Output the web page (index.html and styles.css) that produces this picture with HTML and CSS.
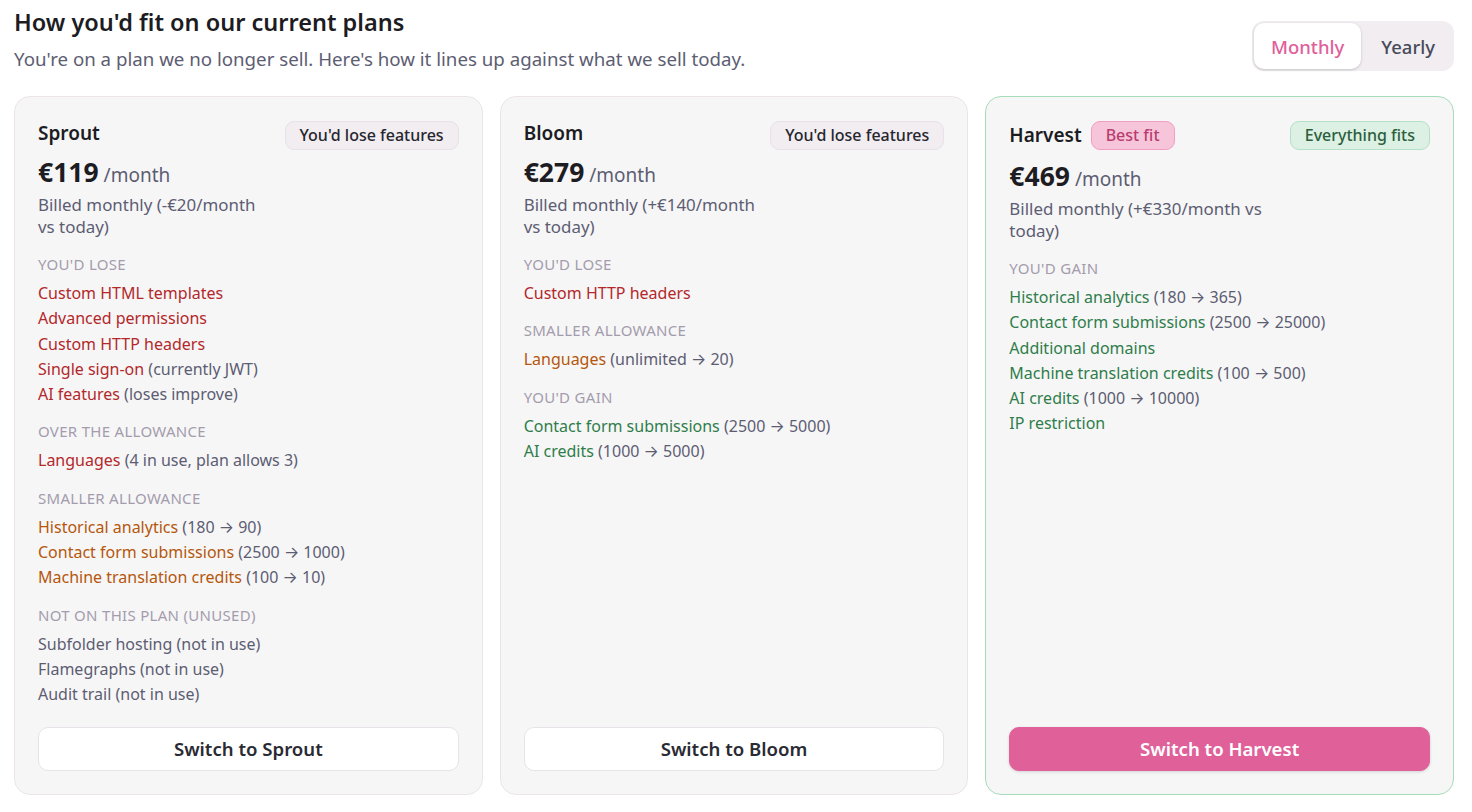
FILE: index.html
```html
<!DOCTYPE html>
<html lang="en">
<head>
    <meta charset="UTF-8">
    <meta name="viewport" content="width=device-width, initial-scale=1.0">
    <title>Plan comparison</title>
    <link rel="stylesheet" href="styles.css">
</head>
<body>
    <div class="page-header">
        <div class="intro">
            <h1>How you'd fit on our current plans</h1>
            <p class="subtitle">You're on a plan we no longer sell. Here's how it lines up against what we sell today.</p>
        </div>
        <div class="period-toggle">
            <button class="period active">Monthly</button>
            <button class="period">Yearly</button>
        </div>
    </div>

    <div class="plans">
        <!-- Sprout -->
        <div class="plan">
            <div class="plan-top">
                <div class="plan-info">
                    <div class="plan-name">Sprout</div>
                    <div class="plan-price"><strong>€119</strong> /month</div>
                    <div class="plan-billing">Billed monthly (-€20/month vs today)</div>
                </div>
                <span class="badge badge-lose">You'd lose features</span>
            </div>
            <div class="plan-sections">
                <div class="section">
                    <div class="section-label">You'd lose</div>
                    <ul>
                        <li><span class="lose">Custom HTML templates</span></li>
                        <li><span class="lose">Advanced permissions</span></li>
                        <li><span class="lose">Custom HTTP headers</span></li>
                        <li><span class="lose">Single sign-on</span> (currently JWT)</li>
                        <li><span class="lose">AI features</span> (loses improve)</li>
                    </ul>
                </div>
                <div class="section">
                    <div class="section-label">Over the allowance</div>
                    <ul>
                        <li><span class="lose">Languages</span> (4 in use, plan allows 3)</li>
                    </ul>
                </div>
                <div class="section">
                    <div class="section-label">Smaller allowance</div>
                    <ul>
                        <li><span class="less">Historical analytics</span> (180 <span class="arrow">→</span> 90)</li>
                        <li><span class="less">Contact form submissions</span> (2500 <span class="arrow">→</span> 1000)</li>
                        <li><span class="less">Machine translation credits</span> (100 <span class="arrow">→</span> 10)</li>
                    </ul>
                </div>
                <div class="section">
                    <div class="section-label">Not on this plan (unused)</div>
                    <ul>
                        <li>Subfolder hosting (not in use)</li>
                        <li>Flamegraphs (not in use)</li>
                        <li>Audit trail (not in use)</li>
                    </ul>
                </div>
            </div>
            <button class="switch-button">Switch to Sprout</button>
        </div>

        <!-- Bloom -->
        <div class="plan">
            <div class="plan-top">
                <div class="plan-info">
                    <div class="plan-name">Bloom</div>
                    <div class="plan-price"><strong>€279</strong> /month</div>
                    <div class="plan-billing">Billed monthly (+€140/month vs today)</div>
                </div>
                <span class="badge badge-lose">You'd lose features</span>
            </div>
            <div class="plan-sections">
                <div class="section">
                    <div class="section-label">You'd lose</div>
                    <ul>
                        <li><span class="lose">Custom HTTP headers</span></li>
                    </ul>
                </div>
                <div class="section">
                    <div class="section-label">Smaller allowance</div>
                    <ul>
                        <li><span class="less">Languages</span> (unlimited <span class="arrow">→</span> 20)</li>
                    </ul>
                </div>
                <div class="section">
                    <div class="section-label">You'd gain</div>
                    <ul>
                        <li><span class="gain">Contact form submissions</span> (2500 <span class="arrow">→</span> 5000)</li>
                        <li><span class="gain">AI credits</span> (1000 <span class="arrow">→</span> 5000)</li>
                    </ul>
                </div>
            </div>
            <button class="switch-button">Switch to Bloom</button>
        </div>

        <!-- Harvest -->
        <div class="plan plan-best">
            <div class="plan-top">
                <div class="plan-info">
                    <div class="plan-name">Harvest <span class="badge badge-best">Best fit</span></div>
                    <div class="plan-price"><strong>€469</strong> /month</div>
                    <div class="plan-billing">Billed monthly (+€330/month vs today)</div>
                </div>
                <span class="badge badge-fits">Everything fits</span>
            </div>
            <div class="plan-sections">
                <div class="section">
                    <div class="section-label">You'd gain</div>
                    <ul>
                        <li><span class="gain">Historical analytics</span> (180 <span class="arrow">→</span> 365)</li>
                        <li><span class="gain">Contact form submissions</span> (2500 <span class="arrow">→</span> 25000)</li>
                        <li><span class="gain">Additional domains</span></li>
                        <li><span class="gain">Machine translation credits</span> (100 <span class="arrow">→</span> 500)</li>
                        <li><span class="gain">AI credits</span> (1000 <span class="arrow">→</span> 10000)</li>
                        <li><span class="gain">IP restriction</span></li>
                    </ul>
                </div>
            </div>
            <button class="switch-button switch-primary">Switch to Harvest</button>
        </div>
    </div>
</body>
</html>
```

FILE: styles.css
```css
* {
    box-sizing: border-box;
}

:root {
    --pink: #e0609a;
    --text-color: #1c1c22;
    --muted: #5d5d72;
    --label: #a49cac;
    --lose: #b3282a;
    --less: #b5570c;
    --gain: #2f7d4a;
    --card-bg: #f6f6f7;
    --card-border: #ebe5ea;
}

body {
    margin: 0;
    padding: 8px 18px 0 14px;
    font-family: 'Noto Sans', sans-serif;
    color: var(--text-color);
    background: white;
}

/* Header */
.page-header {
    display: flex;
    justify-content: space-between;
    align-items: flex-end;
}

h1 {
    margin: 0;
    font-size: 23.5px;
    line-height: 29px;
    font-weight: 600;
}

.subtitle {
    margin: 9px 0 0;
    font-size: 18.7px;
    line-height: 26px;
    color: var(--muted);
}

.period-toggle {
    display: flex;
    gap: 3px;
    padding: 2px;
    background: #f1edf1;
    border-radius: 12px;
    margin-bottom: 1px;
}

.period {
    font-family: inherit;
    font-size: 18.5px;
    font-weight: 500;
    border: none;
    background: none;
    color: #474a5a;
    height: 46px;
    padding: 0 17px;
    border-radius: 10px;
    cursor: pointer;
}

.period.active {
    background: white;
    color: var(--pink);
    box-shadow: 0 1px 3px rgba(0, 0, 0, 0.18);
}

/* Plan cards */
.plans {
    display: grid;
    grid-template-columns: repeat(3, 1fr);
    gap: 17px;
    margin-top: 24px;
}

.plan {
    display: flex;
    flex-direction: column;
    background: var(--card-bg);
    border: 1px solid var(--card-border);
    border-radius: 16px;
    padding: 24px 23px 23px;
}

.plan-best {
    border-color: #a6dcba;
}

.plan-top {
    display: flex;
    align-items: flex-start;
    gap: 12px;
}

.plan-info {
    flex: 1;
    min-width: 0;
}

.plan-name {
    display: flex;
    align-items: center;
    gap: 9px;
    font-size: 19px;
    line-height: 25px;
    font-weight: 600;
}

.plan-price {
    margin-top: 12px;
    font-size: 19px;
    line-height: 28px;
    color: var(--muted);
}

.plan-price strong {
    font-size: 26.5px;
    font-weight: 700;
    color: var(--text-color);
}

.plan-billing {
    margin-top: 5px;
    font-size: 16.9px;
    line-height: 22px;
    color: var(--muted);
}

.badge {
    flex-shrink: 0;
    display: inline-block;
    padding: 0 14px;
    font-size: 16px;
    line-height: 27px;
    font-weight: 500;
    border-radius: 9px;
    border: 1px solid;
}

.badge-lose {
    background: #f1edf1;
    border-color: #e8e2e8;
    color: #26262e;
}

.badge-best {
    background: #f7c5d9;
    border-color: #f29ec1;
    color: #b73d71;
}

.badge-fits {
    background: #dcf0e3;
    border-color: #b6e0c6;
    color: #2b5e3d;
}

/* Feature lists */
.plan-sections {
    display: flex;
    flex-direction: column;
    gap: 13px;
    margin-top: 15px;
    margin-bottom: 19px;
}

.section-label {
    font-size: 15px;
    line-height: 22px;
    text-transform: uppercase;
    letter-spacing: 0.02em;
    color: var(--label);
    margin-bottom: 6px;
}

.section ul {
    list-style: none;
    margin: 0;
    padding: 0;
}

.section li {
    font-size: 16px;
    line-height: 25.3px;
    color: var(--muted);
}

.lose {
    color: var(--lose);
}

.less {
    color: var(--less);
}

.gain {
    color: var(--gain);
}

.arrow {
    font-family: 'Inter', sans-serif;
}

.switch-button {
    margin-top: auto;
    width: 100%;
    height: 44px;
    font-family: inherit;
    font-size: 18.6px;
    font-weight: 600;
    color: #2a2a33;
    background: white;
    border: 1px solid #e8e3e8;
    border-radius: 10px;
    cursor: pointer;
}

.switch-primary {
    background: var(--pink);
    border-color: var(--pink);
    color: white;
    box-shadow: 0 1px 3px rgba(0, 0, 0, 0.15);
}
```
